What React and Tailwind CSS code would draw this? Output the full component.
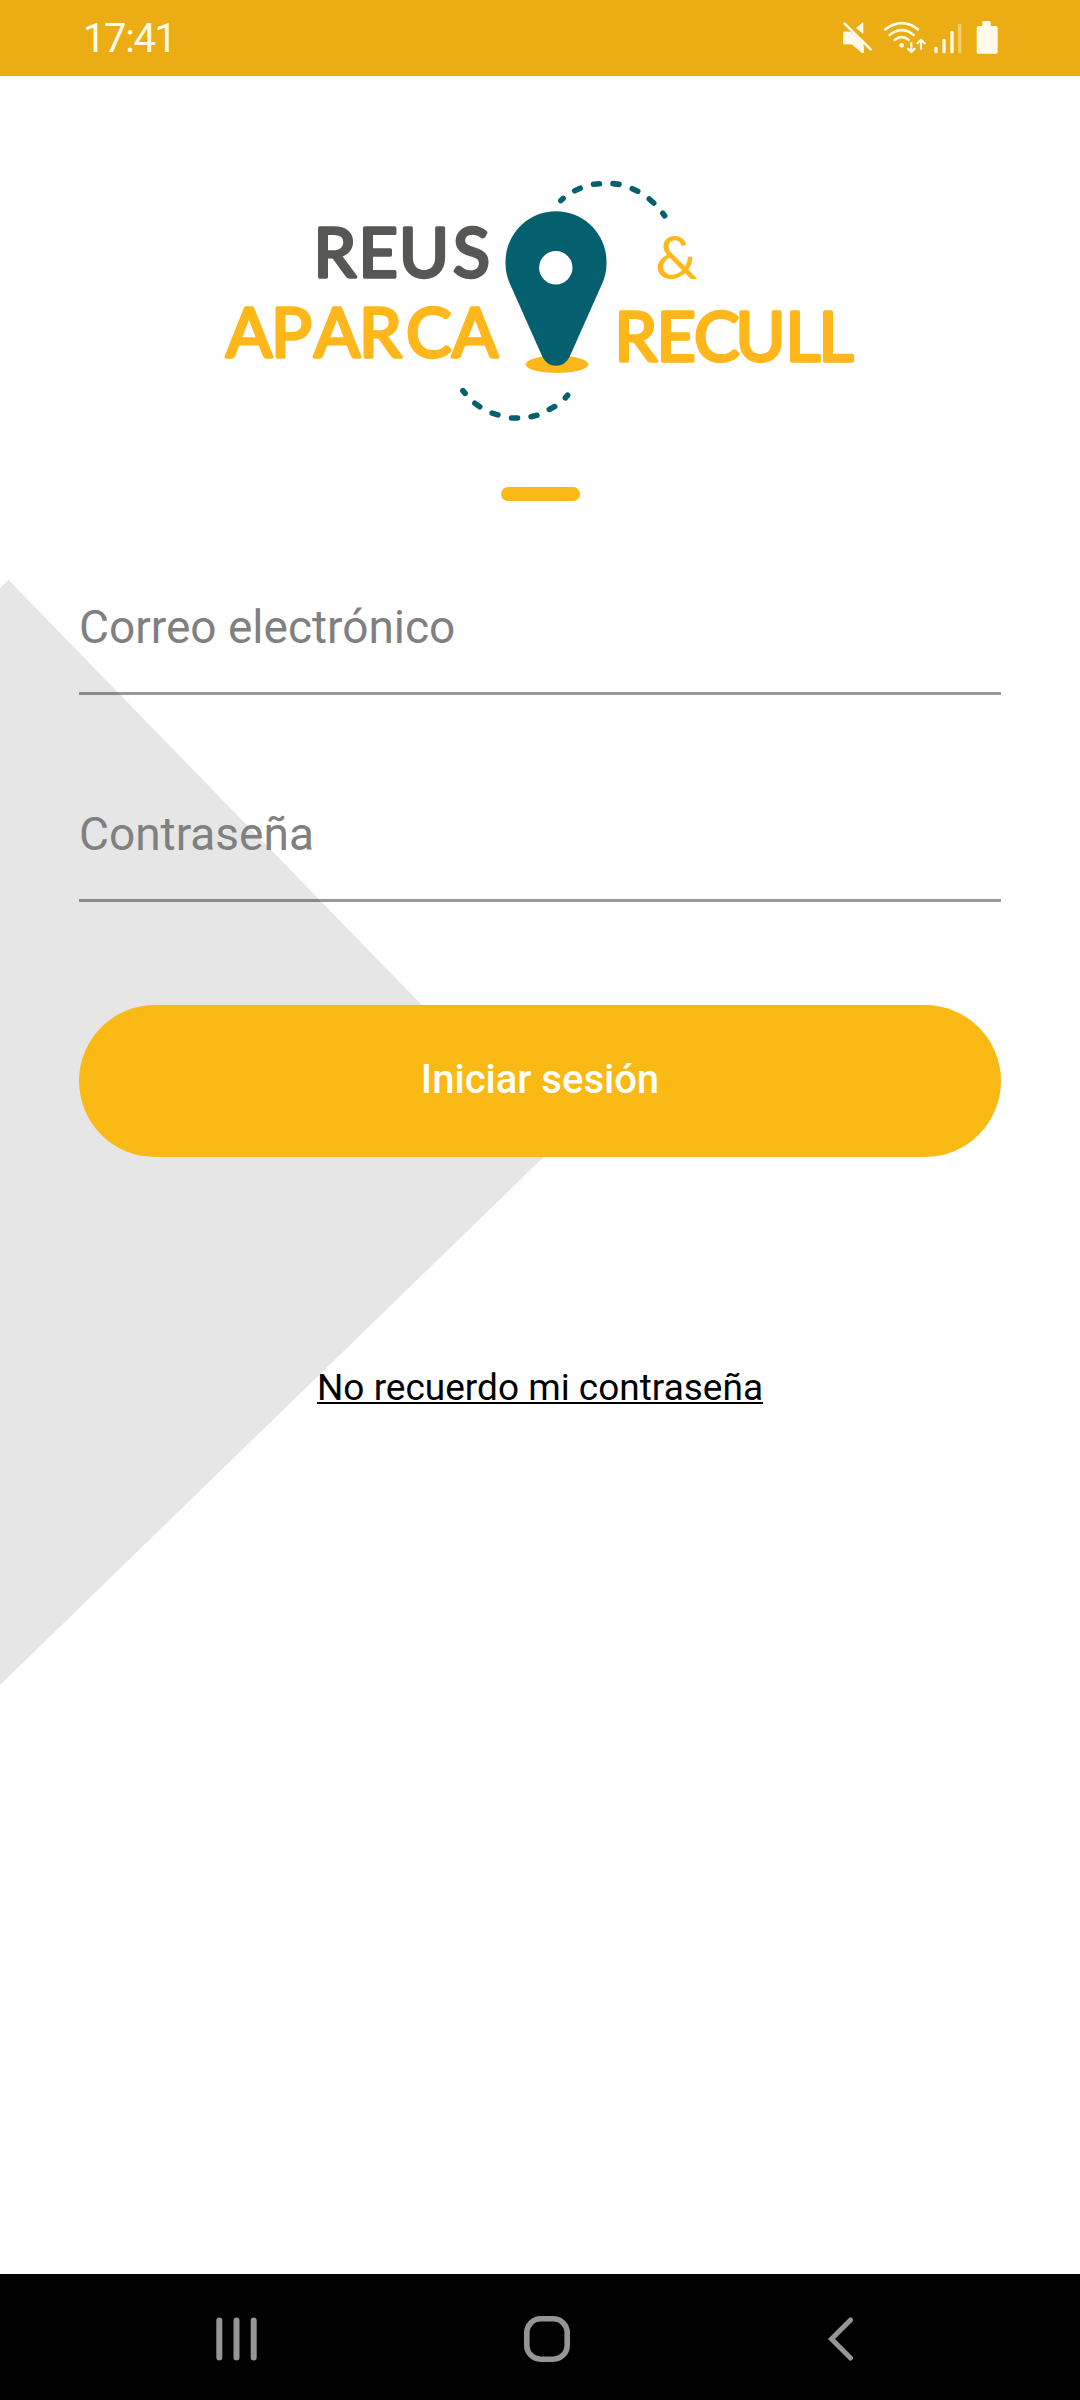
const TEAL = "#04606f";
const AMBER = "#ffb71b";

// Centre and slope (degrees) of each dash along the two dotted arcs.
const DASHES = [
  [562, 199.5, -42, 3], [577.5, 189.5, -26, 6], [596.5, 184, -5, 6], [616, 184, 7, 6],
  [635, 190, 25, 6], [651.5, 201, 42, 6], [663.7, 214.5, 52, 3],
  [464, 392, 50, 3.5], [477.3, 405, 35, 6], [495, 414, 17, 6], [514.5, 418, 0, 6],
  [534, 416, -13, 6], [552, 408, -28, 6], [566.5, 396.5, -50, 3.5],
];

function Word({ x, y, color, children }) {
  return (
    <text
      x={x}
      y={y}
      fontFamily="Lato, sans-serif"
      fontSize="68"
      fill={color}
      stroke={color}
      strokeWidth="3.4"
      strokeLinejoin="round"
    >
      {children}
    </text>
  );
}

function Logo() {
  return (
    <svg className="mx-auto mt-[94px] block shrink-0" width="648" height="260" viewBox="216 170 648 260">
      <Word x="313.5 358.5 399 453" y="277.3" color="#575756">REUS</Word>
      <Word x="226 271 314 359 406 452" y="357.3" color={AMBER}>APARCA</Word>
      <Word x="614.5 656.5 694 735.5 785.5 818.5" y="361.3" color={AMBER}>RECULL</Word>
      <text x="655" y="279" fontFamily="Lato, sans-serif" fontSize="60" fill={AMBER}>&amp;</text>
      <ellipse cx="557" cy="364.3" rx="31.3" ry="8.7" fill={AMBER} />
      <path
        d="M556 211.3C584 211.3 606.5 234 606.5 262C606.5 271 605 277 602 284L569.5 357Q565 365.7 556 365.7Q547 365.7 542.5 357L510 284C507 277 505.5 271 505.5 262C505.5 234 528 211.3 556 211.3Z"
        fill={TEAL}
      />
      <circle cx="555.8" cy="267.7" r="16.7" fill="#fff" />
      {DASHES.map(([x, y, angle, length]) => (
        <path
          key={`${x}-${y}`}
          d={`M${-length / 2} 0h${length}`}
          transform={`translate(${x} ${y}) rotate(${angle})`}
          stroke={TEAL}
          strokeWidth="5.6"
          strokeLinecap="round"
        />
      ))}
    </svg>
  );
}

function StatusBar() {
  return (
    <header className="flex h-[76px] shrink-0 items-center justify-between bg-[#ebad13] pl-[83px] pr-[82px] text-[#fffbe8]">
      <span className="pt-[2px] text-[40px] leading-none tracking-[-1.4px]">17:41</span>
      <div className="flex h-full text-[#fffaea]">
        {/* Muted speaker */}
        <svg className="mr-[10px]" width="31" height="76" viewBox="68 0 93 228" fill="currentColor">
          <path d="M132 66v36l-22-18zM72 95h23l38 36v28h-5l-30-26H76q-5 0-5-5z" />
          <path d="M76 72l78 77" stroke="#ebad13" strokeWidth="17" />
          <path d="M95 95l38 36v28h-5l-30-26H76q-5 0-5-5V100q0-4 4-5z" />
          <path d="M76 71l78 77" stroke="currentColor" strokeWidth="8" strokeLinecap="round" />
        </svg>
        {/* Wi-Fi with data arrows */}
        <svg className="mr-[6px]" width="44" height="76" viewBox="191 0 132 228" fill="none" stroke="currentColor" strokeWidth="8" strokeLinecap="round">
          <path d="M198 88q49-37 98 0M211 105q36-29 72 0M226 120q21-17 42 0" />
          <circle cx="247" cy="136" r="7" fill="currentColor" stroke="none" />
          <path d="M276 129v25M266 146l10 10 10-10M305 147v-26M294 130l11-11 11 11" strokeWidth="6.5" />
        </svg>
        {/* Mobile signal */}
        <svg className="mr-[13px]" width="30" height="76" viewBox="341 0 90 228" fill="currentColor">
          <rect x="345" y="140" width="10" height="20" rx="3" />
          <rect x="369" y="117" width="10" height="43" rx="3" />
          <rect x="393" y="93" width="10" height="67" rx="3" />
          <rect x="416" y="71" width="10" height="89" rx="3" opacity=".4" />
        </svg>
        {/* Battery */}
        <svg width="22" height="76" viewBox="466 0 66 228" fill="currentColor">
          <path d="M485 78V67q0-4 4-4h17q4 0 4 4v11h16q5 0 5 5v73q0 5-5 5h-53q-5 0-5-5V83q0-5 5-5z" />
        </svg>
      </div>
    </header>
  );
}

function Field({ className, type, label }) {
  return (
    <div className={`${className} w-full border-b-3 border-black/40 pb-[25px]`}>
      <input
        type={type}
        placeholder={label}
        aria-label={label}
        className="block h-[80px] w-full bg-transparent text-[46px] outline-none placeholder:text-[#808080]"
      />
    </div>
  );
}

function NavBar() {
  return (
    <nav className="flex h-[126px] shrink-0 items-center justify-between bg-black pb-[-1px] pl-[216px] pr-[226px] pt-[3px] text-[#959595]">
      <svg width="42" height="46" viewBox="0 0 42 46" fill="currentColor">
        <rect x="0.3" y="1.5" width="6" height="43" rx="3" />
        <rect x="17.5" y="1.5" width="6" height="43" rx="3" />
        <rect x="34.7" y="1.5" width="6" height="43" rx="3" />
      </svg>
      <svg className="ml-[10px]" width="46" height="46" viewBox="0 0 46 46" fill="none" stroke="currentColor" strokeWidth="5.6">
        <rect x="2.8" y="2.8" width="40.4" height="40.4" rx="14" />
      </svg>
      <svg width="28" height="46" viewBox="0 0 28 46" fill="none" stroke="currentColor" strokeWidth="5" strokeLinecap="round">
        <path d="M24.5 4L5.5 23l19 19" />
      </svg>
    </nav>
  );
}

export default function App() {
  return (
    <div className="flex h-[2400px] w-[1080px] flex-col overflow-hidden bg-white font-['Roboto',sans-serif]">
      <StatusBar />
      <main className="relative isolate flex flex-1 flex-col px-[79px]">
        <svg className="absolute left-0 top-[504px] -z-10" width="560" height="1110" viewBox="0 580 560 1110">
          <path d="M0 588L8.6 580L557 1144L0 1685Z" fill="#e6e6e6" />
        </svg>
        <Logo />
        <div className="mx-auto mt-[57px] h-[14px] w-[79px] shrink-0 rounded-full bg-[#fab914]" />
        <form className="flex flex-col" onSubmit={(e) => e.preventDefault()}>
          <Field className="mt-[86px]" type="email" label="Correo electrónico" />
          <Field className="mt-[99px]" type="password" label="Contraseña" />
          <button className="mt-[103px] h-[152px] w-full rounded-full bg-[#fab914] pb-[2px] text-[40px] font-medium text-white">
            Iniciar sesión
          </button>
        </form>
        <a className="mx-auto mt-[209px] text-[37px] leading-[44px] text-black underline decoration-2 underline-offset-[2px] [text-decoration-skip-ink:none]">
          No recuerdo mi contraseña
        </a>
      </main>
      <NavBar />
    </div>
  );
}
